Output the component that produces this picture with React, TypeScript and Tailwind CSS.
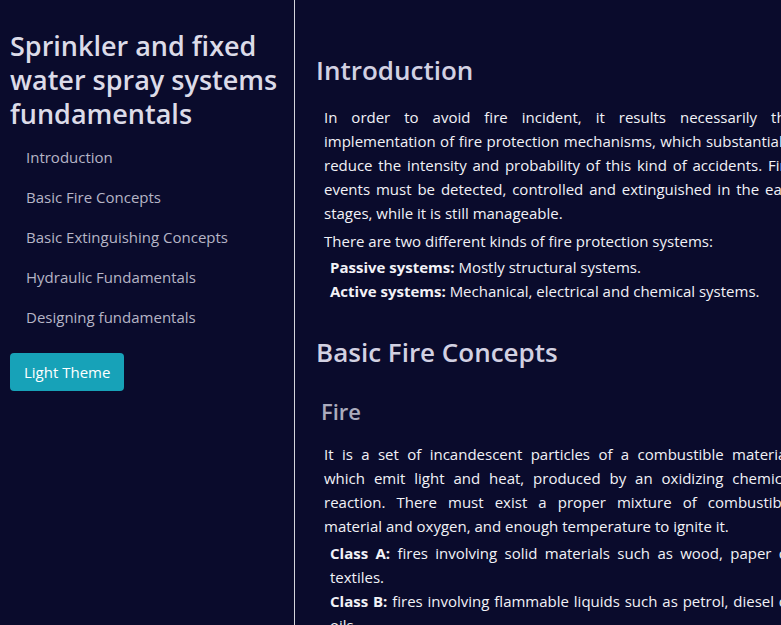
import React from 'react';

interface NavItem {
  id: string;
  label: string;
}

const navItems: NavItem[] = [
  { id: 'intro', label: 'Introduction' },
  { id: 'fire', label: 'Basic Fire Concepts' },
  { id: 'ext', label: 'Basic Extinguishing Concepts' },
  { id: 'hyd', label: 'Hydraulic Fundamentals' },
  { id: 'design', label: 'Designing fundamentals' },
];

// each line is justified on its own so the wrap matches the original page
const Lines: React.FC<{ lines: string[]; lead?: string; loose?: number }> = ({ lines, lead, loose }) => (
  <>
    {lines.map((line, i) => (
      <span
        key={i}
        className={
          i < lines.length - 1
            ? 'block whitespace-nowrap text-justify [text-align-last:justify]' +
              (i === loose ? ' [word-spacing:2px]' : '')
            : 'block text-left'
        }
      >
        {i === 0 && lead ? <b>{lead} </b> : null}
        {line}
      </span>
    ))}
  </>
);

const Sidebar: React.FC = () => {
  return (
    <aside className="w-[295px] shrink-0 h-screen border-r border-[#d4d4dc] pl-[10px] pt-[29px]">
      <h1 className="text-[27px] leading-[34px] font-semibold text-[#dcdbe8]">
        <span className="block">Sprinkler and fixed</span>
        <span className="block">water spray systems</span>
        <span className="block">fundamentals</span>
      </h1>
      <ul className="mt-[6px]">
        {navItems.map(item => (
          <li key={item.id} className="pl-4 py-2 text-[15px] leading-6 text-[#b6b5c6]">
            {item.label}
          </li>
        ))}
      </ul>
      <button className="mt-4 h-[38px] px-[14px] rounded bg-[#17a2b8] text-white text-[15px]">
        Light Theme
      </button>
    </aside>
  );
};

const Content: React.FC = () => {
  return (
    <main className="w-[560px] shrink-0 pl-[21px] pt-[53px] text-[15px] leading-6 text-[#f2f2f7]">
      <h2 className="text-[26px] leading-[34px] font-semibold text-[#d2d1e2]">Introduction</h2>
      <div className="pl-2 w-[478px]">
        <p className="mt-[18px]">
          <Lines
            loose={3}
            lines={[
              'In order to avoid fire incident, it results necessarily the',
              'implementation of fire protection mechanisms, which substantially',
              'reduce the intensity and probability of this kind of accidents. Fire',
              'events must be detected, controlled and extinguished in the earliest',
              'stages, while it is still manageable.',
            ]}
          />
        </p>
        <p className="mt-1">There are two different kinds of fire protection systems:</p>
        <ul className="mt-[2px] pl-[6px]">
          <li><b>Passive systems:</b> Mostly structural systems.</li>
          <li><b>Active systems:</b> Mechanical, electrical and chemical systems.</li>
        </ul>
      </div>

      <h2 className="mt-8 text-[26px] leading-[34px] font-semibold text-[#d2d1e2]">Basic Fire Concepts</h2>
      <h3 className="mt-[29px] pl-[5px] text-[22px] leading-[27px] font-semibold text-[#ababbd]">Fire</h3>
      <div className="pl-2 w-[478px]">
        <p className="mt-[17px]">
          <Lines
            lines={[
              'It is a set of incandescent particles of a combustible material,',
              'which emit light and heat, produced by an oxidizing chemical',
              'reaction. There must exist a proper mixture of combustible',
              'material and oxygen, and enough temperature to ignite it.',
            ]}
          />
        </p>
        <ul className="mt-[3px] pl-[6px]">
          <li>
            <Lines lead="Class A:" lines={['fires involving solid materials such as wood, paper or', 'textiles.']} />
          </li>
          <li>
            <Lines lead="Class B:" lines={['fires involving flammable liquids such as petrol, diesel or', 'oils.']} />
          </li>
          <li>
            <b>Class C:</b> fires involving gases.
          </li>
        </ul>
      </div>
    </main>
  );
};

export default function App() {
  return (
    <div
      className="flex h-screen w-screen overflow-hidden bg-[#0a0b2c]"
      style={{ fontFamily: '"Open Sans", "Noto Sans", sans-serif' }}
    >
      <Sidebar />
      <Content />
    </div>
  );
}
